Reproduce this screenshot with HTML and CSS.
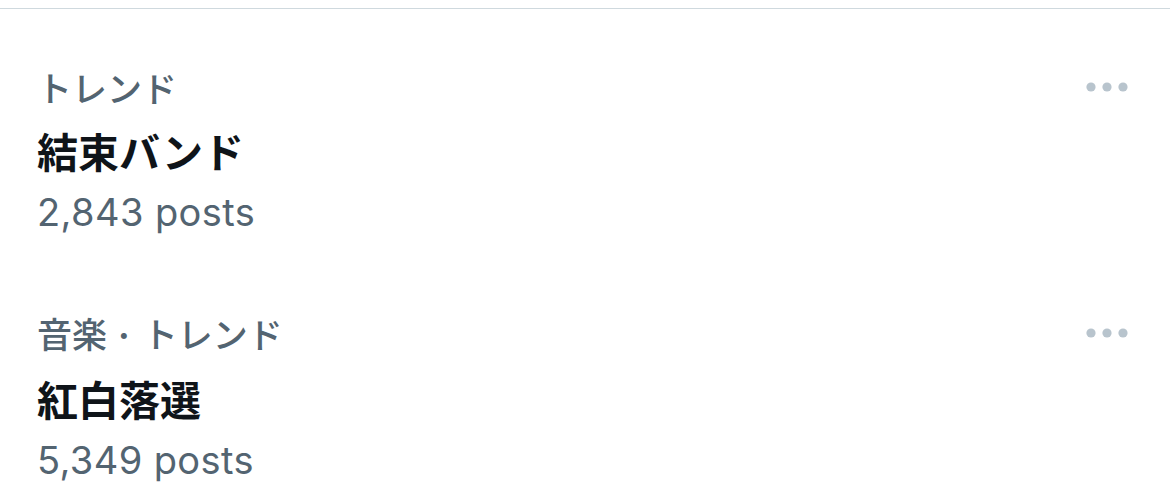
FILE: index.html
```html
<!DOCTYPE html>
<html lang="ja">
<head>
  <meta charset="UTF-8">
  <title>トレンド</title>
  <link rel="stylesheet" href="styles.css">
</head>
<body>
  <div class="divider"></div>

  <div class="trend">
    <div class="trend-body">
      <div class="trend-meta">トレンド</div>
      <div class="trend-name">結束バンド</div>
      <div class="trend-count">2,843 posts</div>
    </div>
    <button class="more" aria-label="More">
      <svg width="48" height="20" viewBox="0 0 48 20">
        <circle cx="8" cy="10" r="4.6"/>
        <circle cx="24" cy="10" r="4.6"/>
        <circle cx="40" cy="10" r="4.6"/>
      </svg>
    </button>
  </div>

  <div class="trend">
    <div class="trend-body">
      <div class="trend-meta">音楽<span class="sep">·</span>トレンド</div>
      <div class="trend-name">紅白落選</div>
      <div class="trend-count">5,349 posts</div>
    </div>
    <button class="more" aria-label="More">
      <svg width="48" height="20" viewBox="0 0 48 20">
        <circle cx="8" cy="10" r="4.6"/>
        <circle cx="24" cy="10" r="4.6"/>
        <circle cx="40" cy="10" r="4.6"/>
      </svg>
    </button>
  </div>
</body>
</html>
```

FILE: styles.css
```css
body {
  margin: 0;
  background: #fff;
  font-family: Inter, "Noto Sans CJK JP", sans-serif;
  color: #0f1419;
}
.divider {
  height: 8px;
  border-bottom: 1px solid #cfd9de;
}
.trend {
  display: flex;
  justify-content: space-between;
  align-items: flex-start;
  padding: 48px 39px 14px 37px;
}
.trend-meta {
  font-family: "Noto Sans CJK JP", sans-serif;
  font-size: 35px;
  font-weight: 500;
  line-height: 60px;
  color: #536471;
}
.sep {
  font-family: Inter, sans-serif;
  font-weight: 700;
  margin: 0 13px 0 11px;
}
.trend-name {
  font-family: "Noto Sans CJK JP", sans-serif;
  font-size: 41px;
  font-weight: 700;
  line-height: 66px;
}
.trend-count {
  font-size: 38px;
  letter-spacing: 0.4px;
  line-height: 58px;
  color: #536471;
}
.more {
  display: flex;
  align-items: center;
  justify-content: center;
  height: 60px;
  padding: 0;
  border: none;
  background: none;
  cursor: pointer;
}
.more svg {
  fill: #b8c4cd;
}
```
